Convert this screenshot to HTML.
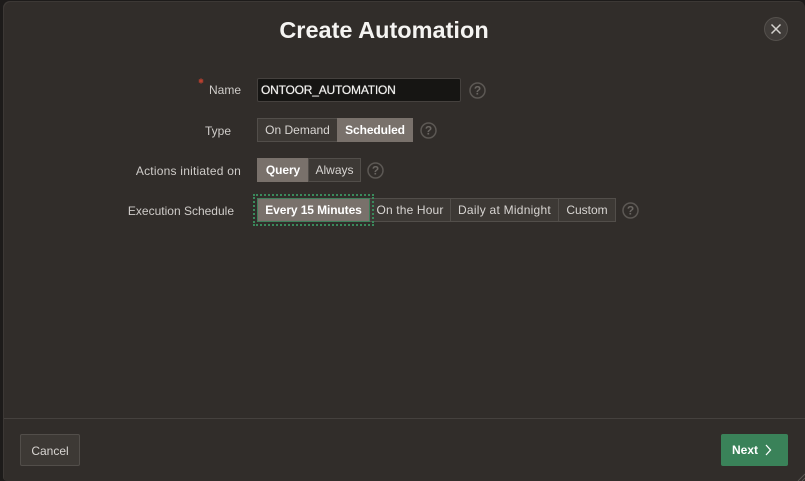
<!DOCTYPE html>
<html lang="en">
<head>
<meta charset="utf-8">
<title>Create Automation</title>
<style>
html,body{margin:0;padding:0;width:805px;height:481px;overflow:hidden;background:#1d1b1a;}
*{box-sizing:border-box;}
body{position:relative;font-family:"Liberation Sans",sans-serif;font-size:12px;color:#d6d3d0;}
.modal{position:absolute;left:3px;top:1px;width:802px;height:480px;background:#312d2a;border-radius:7px 7px 0 4px;box-shadow:inset 1px 1px 0 #3c3835;}
h1{position:absolute;margin:0;left:0;top:15px;width:768px;text-align:center;font-size:23.5px;line-height:30px;font-weight:bold;color:#f5f4f2;white-space:nowrap;}
.lab{position:absolute;text-align:right;line-height:16px;color:#cfccc9;white-space:nowrap;font-size:12px;}
.req{position:absolute;left:198px;top:78px;width:6px;height:6px;}
.input{position:absolute;left:257px;top:78px;width:204px;height:24px;background:#161513;border:1px solid #45413e;border-radius:2px;color:#f0efed;font-size:12px;line-height:23px;padding-left:3px;white-space:nowrap;letter-spacing:-.2px;text-shadow:0 0 .6px #f0efed;}
.seg{position:absolute;height:24px;background:#3d3935;border:1px solid #524e4a;color:#d8d5d2;font-size:12px;line-height:23px;text-align:center;white-space:nowrap;}
.seg.on{background:#79716b;border-color:#79716b;color:#fff;font-weight:bold;letter-spacing:-.1px;}
.focus{position:absolute;left:253px;top:194px;width:121px;height:32px;border:2px dotted #3a8a5c;}
.seg.sel{border-color:#3f7f5a;}
.help{position:absolute;width:17px;height:17px;}
.foot{position:absolute;left:4px;right:0;top:418px;height:1px;background:#45413e;}
.cancel{position:absolute;left:20px;top:434px;width:60px;height:32px;background:#3d3935;border:1px solid #524e4a;border-radius:2px;color:#d8d5d2;font-size:12px;line-height:32px;text-align:center;}
.next{position:absolute;left:721px;top:434px;width:67px;height:32px;background:#3a8259;border-radius:2px;color:#fff;font-size:12px;font-weight:bold;line-height:33px;padding-left:11px;}
.close{position:absolute;left:764px;top:17px;width:24px;height:24px;border-radius:50%;background:#403c39;border:1px solid #55514d;}
svg{display:block;}
</style>
</head>
<body>
<div class="modal"></div>
<h1>Create Automation</h1>

<svg class="req" viewBox="0 0 6 6"><path d="M3 .5V5.5M.8 1.7L5.2 4.3M5.2 1.7L.8 4.3" stroke="#b8402f" stroke-width="1.3" fill="none"/></svg>
<div class="lab" style="left:140px;width:101px;top:82px;">Name</div>
<div class="input">ONTOOR_AUTOMATION</div>
<svg class="help" style="left:468.5px;top:81.5px;" viewBox="0 0 17 17"><circle cx="8.5" cy="8.5" r="7.5" fill="none" stroke="#5c5854" stroke-width="1.5"/><text x="8.5" y="12.5" text-anchor="middle" font-size="12" font-weight="bold" font-family="Liberation Sans" fill="#6a6662">?</text></svg>

<div class="lab" style="left:140px;width:91px;top:123px;">Type</div>
<div class="seg" style="left:257px;top:118px;width:81px;">On Demand</div>
<div class="seg on" style="left:337px;top:118px;width:76px;">Scheduled</div>
<svg class="help" style="left:419.5px;top:121.5px;" viewBox="0 0 17 17"><circle cx="8.5" cy="8.5" r="7.5" fill="none" stroke="#5c5854" stroke-width="1.5"/><text x="8.5" y="12.5" text-anchor="middle" font-size="12" font-weight="bold" font-family="Liberation Sans" fill="#6a6662">?</text></svg>

<div class="lab" style="left:120px;width:121px;top:163px;letter-spacing:.22px;">Actions initiated on</div>
<div class="seg on" style="left:257px;top:158px;width:52px;">Query</div>
<div class="seg" style="left:308px;top:158px;width:53px;">Always</div>
<svg class="help" style="left:367px;top:161.5px;" viewBox="0 0 17 17"><circle cx="8.5" cy="8.5" r="7.5" fill="none" stroke="#5c5854" stroke-width="1.5"/><text x="8.5" y="12.5" text-anchor="middle" font-size="12" font-weight="bold" font-family="Liberation Sans" fill="#6a6662">?</text></svg>

<div class="lab" style="left:110px;width:124px;top:203px;">Execution Schedule</div>
<div class="seg" style="left:369px;top:198px;width:82px;letter-spacing:.15px;">On the Hour</div>
<div class="seg" style="left:450px;top:198px;width:109px;letter-spacing:.25px;">Daily at Midnight</div>
<div class="seg" style="left:558px;top:198px;width:58px;">Custom</div>
<div class="seg on sel" style="left:257px;top:198px;width:113px;">Every 15 Minutes</div>
<div class="focus"></div>
<svg class="help" style="left:622px;top:201.5px;" viewBox="0 0 17 17"><circle cx="8.5" cy="8.5" r="7.5" fill="none" stroke="#5c5854" stroke-width="1.5"/><text x="8.5" y="12.5" text-anchor="middle" font-size="12" font-weight="bold" font-family="Liberation Sans" fill="#6a6662">?</text></svg>

<div class="close">
<svg width="22" height="22" viewBox="0 0 22 22"><path d="M6.5 6.5L15.5 15.5M15.5 6.5L6.5 15.5" stroke="#d5d2cf" stroke-width="1.5" fill="none"/></svg>
</div>

<div class="foot"></div>
<div class="cancel">Cancel</div>
<div class="next">Next
<svg style="position:absolute;left:43px;top:10px;" width="10" height="12" viewBox="0 0 10 12"><path d="M2 1L6.5 6L2 11" stroke="#fff" stroke-width="1.3" fill="none"/></svg>
</div>
<svg style="position:absolute;left:795px;top:471px;" width="10" height="10" viewBox="0 0 10 10"><path d="M3 10L10 3M7 10L10 7" stroke="#5a5652" stroke-width="1" fill="none"/></svg>
</body>
</html>
